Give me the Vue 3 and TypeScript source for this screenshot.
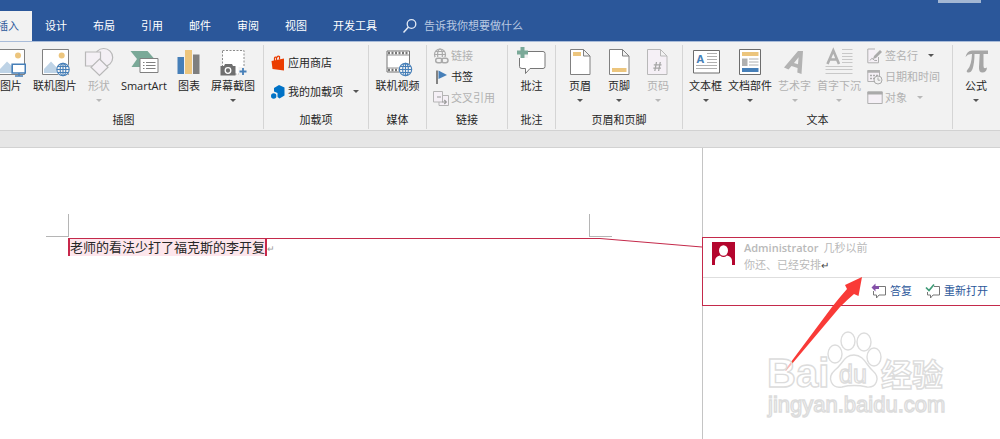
<script setup lang="ts">
import { ref } from 'vue'

interface Command {
  label: string
  icon: string
  disabled?: boolean
  caret?: boolean
}

interface Group {
  name: string
  key: string
  large: Command[]
  small: Command[]
}

const tabs: string[] = ['插入', '设计', '布局', '引用', '邮件', '审阅', '视图', '开发工具']
const activeTab = ref('插入')
const query = ref('')

const groups: Group[] = [
  {
    name: '插图',
    key: 'illustrations',
    large: [
      { label: '图片', icon: 'picture' },
      { label: '联机图片', icon: 'online-picture' },
      { label: '形状', icon: 'shapes', disabled: true, caret: true },
      { label: 'SmartArt', icon: 'smartart' },
      { label: '图表', icon: 'chart' },
      { label: '屏幕截图', icon: 'screenshot', caret: true },
    ],
    small: [],
  },
  {
    name: '加载项',
    key: 'addins',
    large: [],
    small: [
      { label: '应用商店', icon: 'store' },
      { label: '我的加载项', icon: 'my-addins', caret: true },
    ],
  },
  { name: '媒体', key: 'media', large: [{ label: '联机视频', icon: 'video' }], small: [] },
  {
    name: '链接',
    key: 'links',
    large: [],
    small: [
      { label: '链接', icon: 'link', disabled: true },
      { label: '书签', icon: 'bookmark' },
      { label: '交叉引用', icon: 'crossref', disabled: true },
    ],
  },
  { name: '批注', key: 'comments', large: [{ label: '批注', icon: 'comment' }], small: [] },
  {
    name: '页眉和页脚',
    key: 'headers',
    large: [
      { label: '页眉', icon: 'header', caret: true },
      { label: '页脚', icon: 'footer', caret: true },
      { label: '页码', icon: 'page-number', disabled: true, caret: true },
    ],
    small: [],
  },
  {
    name: '文本',
    key: 'text',
    large: [
      { label: '文本框', icon: 'textbox', caret: true },
      { label: '文档部件', icon: 'parts', caret: true },
      { label: '艺术字', icon: 'wordart', disabled: true, caret: true },
      { label: '首字下沉', icon: 'dropcap', disabled: true, caret: true },
    ],
    small: [
      { label: '签名行', icon: 'signature', disabled: true, caret: true },
      { label: '日期和时间', icon: 'datetime', disabled: true },
      { label: '对象', icon: 'object', disabled: true, caret: true },
    ],
  },
  { name: '', key: 'symbols', large: [{ label: '公式', icon: 'equation', caret: true }], small: [] },
]
</script>

<template>
  <div class="word">
    <svg class="sprite" aria-hidden="true">
      <symbol id="i-globe" viewBox="0 0 16 16">
        <circle cx="8" cy="8" r="7.4" fill="#f2f2f2" />
        <g fill="none" stroke="currentColor" stroke-width="1.2">
          <circle cx="8" cy="8" r="6.6" />
          <ellipse cx="8" cy="8" rx="3" ry="6.6" />
          <path d="M8 1.4V14.6M1.4 8H14.6M2.4 4.8H13.6M2.4 11.2H13.6" />
        </g>
      </symbol>
      <symbol id="i-picture" viewBox="0 0 30 30">
        <path d="M1.5 2.5H28.5V27.5H1.5Z" fill="#fff" stroke="#808080" />
        <path d="M3 26V23L11 14.5L20 23V26Z" fill="#bed3e6" />
        <circle cx="22" cy="8.5" r="3" fill="#ecc57d" />
        <path d="M16.2 17.2H29.3V26H16.2Z" fill="#fff" stroke="#467fb8" stroke-width="1.6" />
        <path d="M19 29H27M23 26V29" stroke="#467fb8" stroke-width="1.4" />
      </symbol>
      <symbol id="i-online-picture" viewBox="0 0 30 30">
        <path d="M2.5 2.5H28.5V27.5H2.5Z" fill="#fff" stroke="#808080" />
        <path d="M4 26V22L11 14.5L20 24V26Z" fill="#bed3e6" />
        <circle cx="21.7" cy="8.5" r="3" fill="#ecc57d" />
        <use href="#i-globe" x="15.5" y="15" width="15" height="15" color="#467fb8" />
      </symbol>
      <symbol id="i-shapes" viewBox="0 0 30 30">
        <g fill="#f4f0f5" stroke="#b8b8b8" stroke-width="1.2">
          <circle cx="19.7" cy="10.5" r="9" />
          <path d="M1.5 5H16.5V19H1.5Z" />
          <path d="M15.5 12L24 20.2L15.5 28.5L7 20.2Z" />
        </g>
      </symbol>
      <symbol id="i-smartart" viewBox="0 0 30 30">
        <path d="M1.5 4H18.5L25.5 12V20H2.5L8 12Z" fill="#7aa998" />
        <path d="M11 11.5H29V25.5H11Z" fill="#fff" stroke="#808080" />
        <path d="M14 15.5H15.5M14 18.5H15.5M14 21.5H15.5M17 15.5H26.5M17 18.5H26.5M17 21.5H26.5" stroke="#808080" />
      </symbol>
      <symbol id="i-chart" viewBox="0 0 30 30">
        <path d="M3.5 10H10V27H3.5Z" fill="#467fb8" />
        <path d="M11 3H18V27H11Z" fill="#ecc57d" />
        <path d="M19 7.5H25.5V27H19Z" fill="#7f7f7f" />
      </symbol>
      <symbol id="i-screenshot" viewBox="0 0 30 30">
        <path d="M4.5 3.5H26V27H4.5Z" fill="#fff" stroke="#8c8c8c" stroke-dasharray="2 1.5" />
        <path d="M2.5 19H6L7 17H14L15 19H17.5V28.5H2.5Z" fill="#6f6f6f" />
        <circle cx="10" cy="23.5" r="2.8" fill="none" stroke="#fff" stroke-width="1.3" />
        <path d="M20.5 20H30V29H20.5Z" fill="#f2f2f2" />
        <path d="M25 21V28M21.5 24.5H28.5" stroke="#467fb8" stroke-width="1.8" />
      </symbol>
      <symbol id="i-video" viewBox="0 0 30 30">
        <path d="M4 4H26.5V25H4Z" fill="#fff" stroke="#777" />
        <path d="M5 6H26M5 23H26" stroke="#777" stroke-width="2.4" stroke-dasharray="2 1.5" />
        <path d="M4 8H26.5M4 21H26.5" stroke="#777" stroke-width=".8" />
        <use href="#i-globe" x="15" y="15" width="15" height="15" color="#467fb8" />
      </symbol>
      <symbol id="i-comment" viewBox="0 0 30 30">
        <path d="M4 4.500H26Q28 4.500 28 6.500V19.500Q28 21.500 26 21.500H13L8.500 26.500V21.500H5Q2.500 21.500 2.500 19.500V6Z" fill="#fff" stroke="#777" />
        <path d="M0 0H11V11H0Z" fill="#f2f2f2" />
        <path d="M5.5 0V11M0 5.5H11" stroke="#7aa998" stroke-width="4" />
      </symbol>
      <symbol id="i-header" viewBox="0 0 30 30">
        <path d="M5.5 2.5H18.5L25 9V27.5H5.5ZM18.5 2.5V9H25" fill="#fff" stroke="#808080" />
        <path d="M8 5H16V9H8Z" fill="#ecc57d" />
      </symbol>
      <symbol id="i-footer" viewBox="0 0 30 30">
        <path d="M5.5 2.5H18.5L25 9V27.5H5.5ZM18.5 2.5V9H25" fill="#fff" stroke="#808080" />
        <path d="M8 21H22.5V25H8Z" fill="#ecc57d" />
      </symbol>
      <symbol id="i-page-number" viewBox="0 0 30 30">
        <path d="M4.5 2.5H17.5L24 9V27.5H4.5ZM17.5 2.5V9H24" fill="#f5f0f6" stroke="#b8b8b8" />
        <path d="M13.5 15L11.8 24M17.3 15L15.6 24M10.8 17.8H18.5M10.3 21.2H18" stroke="#a6a6a6" stroke-width="1.3" />
      </symbol>
      <symbol id="i-textbox" viewBox="0 0 30 30">
        <path d="M2.5 3.5H28.5V26H2.5Z" fill="#fff" stroke="#6d6d6d" />
        <text x="5.5" y="15.5" font-size="11" font-weight="700" fill="#467fb8">A</text>
        <path d="M16 6.5H26M16 9.5H26M16 12.5H26M16 15.5H26M5 18.5H26M5 21.5H26" stroke="#b0b0b0" />
      </symbol>
      <symbol id="i-parts" viewBox="0 0 30 30">
        <path d="M4.5 2.5H25.5V27.5H4.5Z" fill="#fff" stroke="#6d6d6d" />
        <path d="M7 5H23.5V9H7Z" fill="#ecc57d" />
        <path d="M7 21H23.5V25H7Z" fill="#467fb8" />
        <path d="M7 11.5H12.5V19H7Z" fill="#b0b0b0" />
        <path d="M14 12H23.5M14 15H23.5M14 18H23.5" stroke="#b0b0b0" />
      </symbol>
      <symbol id="i-wordart" viewBox="0 0 30 30">
        <path d="M4 20.500L18 4H23L21.500 27L17.300 25.500L17.600 21L11.500 19L8.500 22.500ZM14 16L18 17.300L18.600 10.200Z" fill="#b3b3b3" fill-rule="evenodd" />
      </symbol>
      <symbol id="i-dropcap" viewBox="0 0 30 30">
        <path d="M3.5 17L9.3 3.5L15 17M5.5 12.5H13" fill="none" stroke="#b0b0b0" stroke-width="2.6" />
        <path d="M18 2.5H28.5M18 6.5H28.5M18 9.5H28.5M18 12.5H28.5M18 15.5H28.5M1.5 19.5H28.5M1.5 22.5H28.5M1.5 26.5H28.5" stroke="#c8c8c8" />
      </symbol>
      <symbol id="i-equation" viewBox="0 0 30 30">
        <path d="M4.500 10Q6 3.500 11 3.500H27V7H22.500V19Q22.500 22.500 26 20.500Q25.500 25.500 21.500 25.500Q17.500 25.500 18 20L18.700 7H13.500Q13.500 16 11.500 22Q10 26 6.800 25.500Q4.500 24.500 7 22Q10.500 18 11 7Q7 6.500 4.500 10Z" fill="#a6a6a6" />
      </symbol>

      <symbol id="i-store" viewBox="0 0 16 16">
        <path d="M1.5 6L14 3.5V15.5L2.5 14Z" fill="#eb3c00" />
        <path d="M4.5 6V3Q5 1.5 6.5 2.5V5M6.5 3Q7.5 .5 9.5 1.5V4.5" fill="none" stroke="#eb3c00" stroke-width="1.2" />
      </symbol>
      <symbol id="i-my-addins" viewBox="0 0 16 16">
        <path d="M9 1L14.500 3.500V11.500L9.500 14.500L7.500 13V9L4 7.500V4Z" fill="#0072c6" />
        <circle cx="3.7" cy="12" r="2.7" fill="#0072c6" />
      </symbol>
      <symbol id="i-link" viewBox="0 0 16 16">
        <g fill="none" stroke="#aaa" stroke-width="1.2">
          <circle cx="7" cy="6.5" r="5.5" />
          <ellipse cx="7" cy="6.5" rx="2.4" ry="5.5" />
          <path d="M1.5 6.5H12.5M2.5 3.5H11.5" />
        </g>
        <path d="M2 9H16V16H2Z" fill="#f2f2f2" />
        <g fill="none" stroke="#aaa" stroke-width="1.5">
          <rect x="2.7" y="10.2" width="6.5" height="4.5" rx="2.2" />
          <rect x="8.5" y="10.2" width="6.5" height="4.5" rx="2.2" />
        </g>
      </symbol>
      <symbol id="i-bookmark" viewBox="0 0 16 16">
        <path d="M4 1.5V15" stroke="#777" stroke-width="1.8" />
        <path d="M5.5 1.5L14 6L5.5 10Z" fill="#467fb8" />
      </symbol>
      <symbol id="i-crossref" viewBox="0 0 16 16">
        <path d="M6 5.5H15.5V15.5H6Z" fill="#f5f0f6" stroke="#b5b5b5" />
        <path d="M.5 1.500H9.500V12H.5Z" fill="#f5f0f6" stroke="#b5b5b5" />
        <path d="M4 7H8M9 12H13M11.300 10L13.300 12L11.300 14" fill="none" stroke="#9a9a9a" stroke-width="1.2" />
      </symbol>
      <symbol id="i-signature" viewBox="0 0 16 16">
        <path d="M8 1H.8V14.8H11.5V9" fill="#f5f0f6" stroke="#b0b0b0" />
        <path d="M6 11L7 8L13 2L15 4L9 10Z" fill="#aaa" />
        <path d="M3 12.5Q5 9 6 11T10 12.5" fill="none" stroke="#aaa" />
      </symbol>
      <symbol id="i-datetime" viewBox="0 0 16 16">
        <path d="M.8 1.5H12.5V12.5H.8Z" fill="#f5f0f6" stroke="#b0b0b0" />
        <path d="M.5 2.5H13" stroke="#b0b0b0" stroke-width="2.5" />
        <path d="M3 6.5H11M3 9.5H8" stroke="#aaa" stroke-width="1.5" stroke-dasharray="2 1" />
        <circle cx="11" cy="11" r="4" fill="#f2f2f2" stroke="#aaa" />
        <path d="M11 8.5V11.2H13.2" fill="none" stroke="#aaa" />
      </symbol>
      <symbol id="i-object" viewBox="0 0 16 16">
        <path d="M.8 2H15.2V13.5H.8Z" fill="#f5f0f6" stroke="#b0b0b0" />
        <path d="M.5 3H15.5" stroke="#aaa" stroke-width="3" />
      </symbol>
    </svg>

    <header class="titlebar">
      <span class="window-tip"></span>
      <nav class="tabs" role="tablist">
        <button
          v-for="tab in tabs"
          :key="tab"
          type="button"
          role="tab"
          class="tab"
          :class="{ active: tab === activeTab }"
          :aria-selected="tab === activeTab"
          @click="activeTab = tab"
        >{{ tab }}</button>
      </nav>
      <label class="search">
        <svg class="search-icon" viewBox="0 0 16 16" aria-hidden="true">
          <circle cx="9.5" cy="6" r="4.3" fill="none" stroke="#e3eaf5" stroke-width="1.3" />
          <path d="M6.5 9L1.5 14.5" stroke="#e3eaf5" stroke-width="1.5" />
        </svg>
        <input v-model="query" type="text" class="search-input" placeholder="告诉我你想要做什么" aria-label="告诉我你想要做什么" />
      </label>
    </header>

    <div class="ribbon">
      <section v-for="group in groups" :key="group.key" class="group" :class="group.key">
        <div class="commands">
          <button
            v-for="cmd in group.large"
            :key="cmd.icon"
            type="button"
            class="large"
            :disabled="cmd.disabled"
          >
            <svg class="large-icon" aria-hidden="true"><use :href="'#i-' + cmd.icon" /></svg>
            <span>{{ cmd.label }}</span>
            <i v-if="cmd.caret" class="caret"></i>
          </button>
          <div v-if="group.small.length" class="stack">
            <button
              v-for="cmd in group.small"
              :key="cmd.icon"
              type="button"
              class="small"
              :class="cmd.icon"
              :disabled="cmd.disabled"
            >
              <svg class="small-icon" aria-hidden="true"><use :href="'#i-' + cmd.icon" /></svg>
              <span>{{ cmd.label }}</span>
              <i v-if="cmd.caret" class="caret"></i>
            </button>
          </div>
        </div>
        <div class="caption">{{ group.name }}</div>
      </section>
    </div>
    <div class="band"></div>

    <main class="workspace">
      <article class="page">
        <div class="margins"><span class="corner left"></span><span class="corner right"></span></div>
        <p class="paragraph"><mark>老师的看法少打了福克斯的李开复</mark><span class="pilcrow">↵</span></p>
        <svg class="connector" viewBox="0 0 634 12" preserveAspectRatio="none" aria-hidden="true">
          <path d="M0 1.5H532L634 10" fill="none" stroke="#c42a4b" stroke-width="1.2" />
        </svg>
      </article>
      <aside class="markup">
        <section class="comment">
          <div class="comment-body">
            <svg class="avatar" viewBox="0 0 23 23" aria-hidden="true">
              <path d="M0 0H23V23H0Z" fill="#b4062e" />
              <path d="M3 23V19Q3 14.5 8 13.5Q11.5 16.5 15 13.5Q20 14.5 20 19V23Z" fill="#fff" />
              <ellipse cx="11.5" cy="8.5" rx="4.5" ry="5.2" fill="#fff" />
            </svg>
            <div class="comment-text">
              <div><b>Administrator</b><time>几秒以前</time></div>
              <div>你还、已经安排<span class="return">↵</span></div>
            </div>
          </div>
          <div class="actions">
            <button type="button" class="action">
              <svg class="action-icon" viewBox="0 0 16 16" aria-hidden="true">
                <path d="M8 3.5H14.5V12H8L5.500 15V12H2.500V8" fill="#fff" stroke="#777" />
                <path d="M4.5 .5V3H8V6H4.5V8.5L.5 4.5Z" fill="#8450a8" />
              </svg>
              <span>答复</span>
            </button>
            <button type="button" class="action">
              <svg class="action-icon" viewBox="0 0 16 16" aria-hidden="true">
                <path d="M9 3.5H14.5V12H8L5.500 15V12H2.500V9" fill="#fff" stroke="#777" />
                <path d="M1 4.5L4 7.5L9 1.5" fill="none" stroke="#3f9b77" stroke-width="1.7" />
              </svg>
              <span>重新打开</span>
            </button>
          </div>
        </section>

        <svg class="pointer" viewBox="0 0 80 96" aria-hidden="true">
          <path d="M77 1L73.500 20L69 18Q62 24 55 31L1 95L0 94L47 31Q54 22 62 13L60 9Z" fill="#f93a37" />
        </svg>

        <svg class="watermark" viewBox="0 0 184 90" aria-hidden="true">
          <g fill="#fff" fill-opacity=".65" stroke="#dcdcdc" stroke-width="1.4">
            <text x="1" y="57" font-size="40" font-weight="700">Bai</text>
            <ellipse cx="69" cy="24" rx="7" ry="9" />
            <ellipse cx="82" cy="11" rx="7" ry="9" />
            <ellipse cx="98" cy="12" rx="7" ry="9" />
            <ellipse cx="108" cy="27" rx="7" ry="9" />
            <path d="M88 25C98 25 100 35 107 41C115 48 110 58 101 57C92 55 84 55 76 57C66 59 60 48 69 40C77 34 78 25 88 25Z" />
            <text x="73" y="53" font-size="25">du</text>
            <text x="115" y="56" font-size="31" font-weight="700">经验</text>
            <text x="2" y="82" font-size="22">jingyan.baidu.com</text>
          </g>
        </svg>
      </aside>
    </main>
  </div>
</template>

<style>
body {
  margin: 0;
  overflow: hidden;
}
</style>

<style scoped>
.word {
  display: flex;
  flex-direction: column;
  min-height: 100vh;
  overflow: hidden;
  background: #fff;
  color: #262626;
  font: 11px/16px "Open Sans", "Noto Sans CJK SC", sans-serif;
}

button {
  padding: 0;
  border: 0;
  background: none;
  color: inherit;
  font: inherit;
  white-space: nowrap;
}

.sprite {
  position: absolute;
  width: 0;
  height: 0;
}

.titlebar {
  position: relative;
  display: flex;
  align-items: flex-end;
  height: 41px;
  border-bottom: 1px solid #a9bcd9;
  background: #2b579a;
  color: #fff;
}

.window-tip {
  position: absolute;
  top: 0;
  right: 19px;
  width: 43px;
  height: 3px;
  background: #a3b7d3;
}

.tabs {
  display: flex;
  margin-left: -16px;
}

.tab {
  height: 30px;
  padding: 0 13px;
}

.tab.active {
  background: #f2f2f2;
  color: #2b579a;
}

.search {
  display: flex;
  align-items: center;
  gap: 6px;
  height: 30px;
  margin-left: 12px;
}

.search-icon {
  width: 16px;
  height: 16px;
}

.search-input {
  width: 160px;
  padding: 0;
  border: 0;
  outline: 0;
  background: none;
  color: #fff;
  font: inherit;
}

.search-input::placeholder {
  color: #b9c9e2;
  opacity: 1;
}

.ribbon {
  display: grid;
  grid-template-columns: 280px 105px 58px 81px 48px 127px 270px 1fr;
  margin-left: -16px;
  padding: 3px 0 1px;
  background: #f2f2f2;
}

.group {
  display: flex;
  flex-direction: column;
  border-right: 1px solid #d5d5d5;
}

.group.symbols {
  border-right: 0;
}

.commands {
  display: flex;
  flex: 1;
  justify-content: center;
  gap: 11px;
  min-height: 67px;
}

.illustrations .commands {
  justify-content: flex-end;
  padding-right: 8px;
}

.headers .commands {
  gap: 17px;
}

.text .commands {
  justify-content: flex-start;
  gap: 6px;
  padding-left: 6px;
}

.symbols .commands {
  justify-content: flex-start;
  padding-left: 12px;
}

.large {
  display: flex;
  flex-direction: column;
  align-items: center;
  justify-content: flex-start;
  padding-top: 2px;
}

.large-icon {
  width: 30px;
  height: 30px;
  margin: 0 -8px 1px;
}

.large .caret {
  margin-top: 5px;
}

.caret {
  width: 0;
  height: 0;
  border: 3px solid transparent;
  border-top-color: #555;
  border-bottom: 0;
}

button:disabled {
  color: #b1b1b1;
}

button:disabled .caret {
  border-top-color: #b8b8b8;
}

.signature:disabled .caret {
  border-top-color: #555;
}

.stack {
  display: flex;
  flex: 1;
  flex-direction: column;
}

.links .stack {
  padding-left: 6px;
}

.addins .stack {
  padding: 3px 0 0 6px;
}

.small {
  display: flex;
  align-items: center;
  gap: 2px;
  height: 21px;
}

.addins .small {
  height: 29px;
}

.small .caret {
  margin-left: 8px;
}

.small-icon {
  width: 16px;
  height: 16px;
}

.caption {
  height: 16px;
  padding-bottom: 1px;
  text-align: center;
}

.band {
  height: 16px;
  border: 1px solid #d2d2d2;
  border-width: 1px 0;
  background: #e6e6e6;
}

.workspace {
  display: grid;
  flex: 1;
  grid-template-columns: 1fr 298px;
}

.page {
  position: relative;
  padding: 66px 90px 0 46px;
}

.margins {
  display: flex;
  justify-content: space-between;
}

.corner {
  box-sizing: border-box;
  width: 23px;
  height: 23px;
  border-bottom: 1px solid #b5b5b5;
}

.corner.left {
  border-right: 1px solid #b5b5b5;
}

.corner.right {
  border-left: 1px solid #b5b5b5;
}

.paragraph {
  margin: 1px 0 0 22px;
  font-size: 13px;
  line-height: 18px;
}

.paragraph mark {
  display: inline-block;
  border: 1px solid #c8284b;
  border-width: 0 2px;
  background: #fde6ec;
  color: #262626;
}

.pilcrow {
  color: #999;
  font-size: 9px;
}

.connector {
  position: absolute;
  top: 89px;
  right: 0;
  left: 68px;
  width: calc(100% - 68px);
  height: 12px;
}

.markup {
  position: relative;
  padding-top: 89px;
  border-left: 1px solid #c4c4c4;
}

.comment {
  margin-left: -1px;
  border: 1px solid #c42a4b;
  border-right: 0;
  background: #fff;
}

.comment-body {
  display: flex;
  gap: 9px;
  padding: 1px 9px 4px;
  border-bottom: 1px solid #dedede;
  color: #b9b9b9;
  line-height: 17px;
}

.avatar {
  width: 23px;
  height: 23px;
  margin-top: 3px;
}

.comment-text b {
  margin-right: 5px;
  font-weight: 600;
}

.return {
  color: #444;
  font-size: 10px;
  line-height: 1;
}

.actions {
  display: flex;
  justify-content: flex-end;
  gap: 13px;
  padding: 5px 12px 6px 0;
  color: #2b579a;
}

.action {
  display: flex;
  align-items: center;
  gap: 3px;
}

.action-icon {
  width: 16px;
  height: 16px;
}

.pointer {
  position: absolute;
  top: 128px;
  left: 82px;
  width: 80px;
  height: 96px;
}

.watermark {
  position: absolute;
  top: 182px;
  left: 63px;
  width: 184px;
  height: 90px;
  font-family: "Liberation Sans", "Noto Sans CJK SC", sans-serif;
}
</style>
